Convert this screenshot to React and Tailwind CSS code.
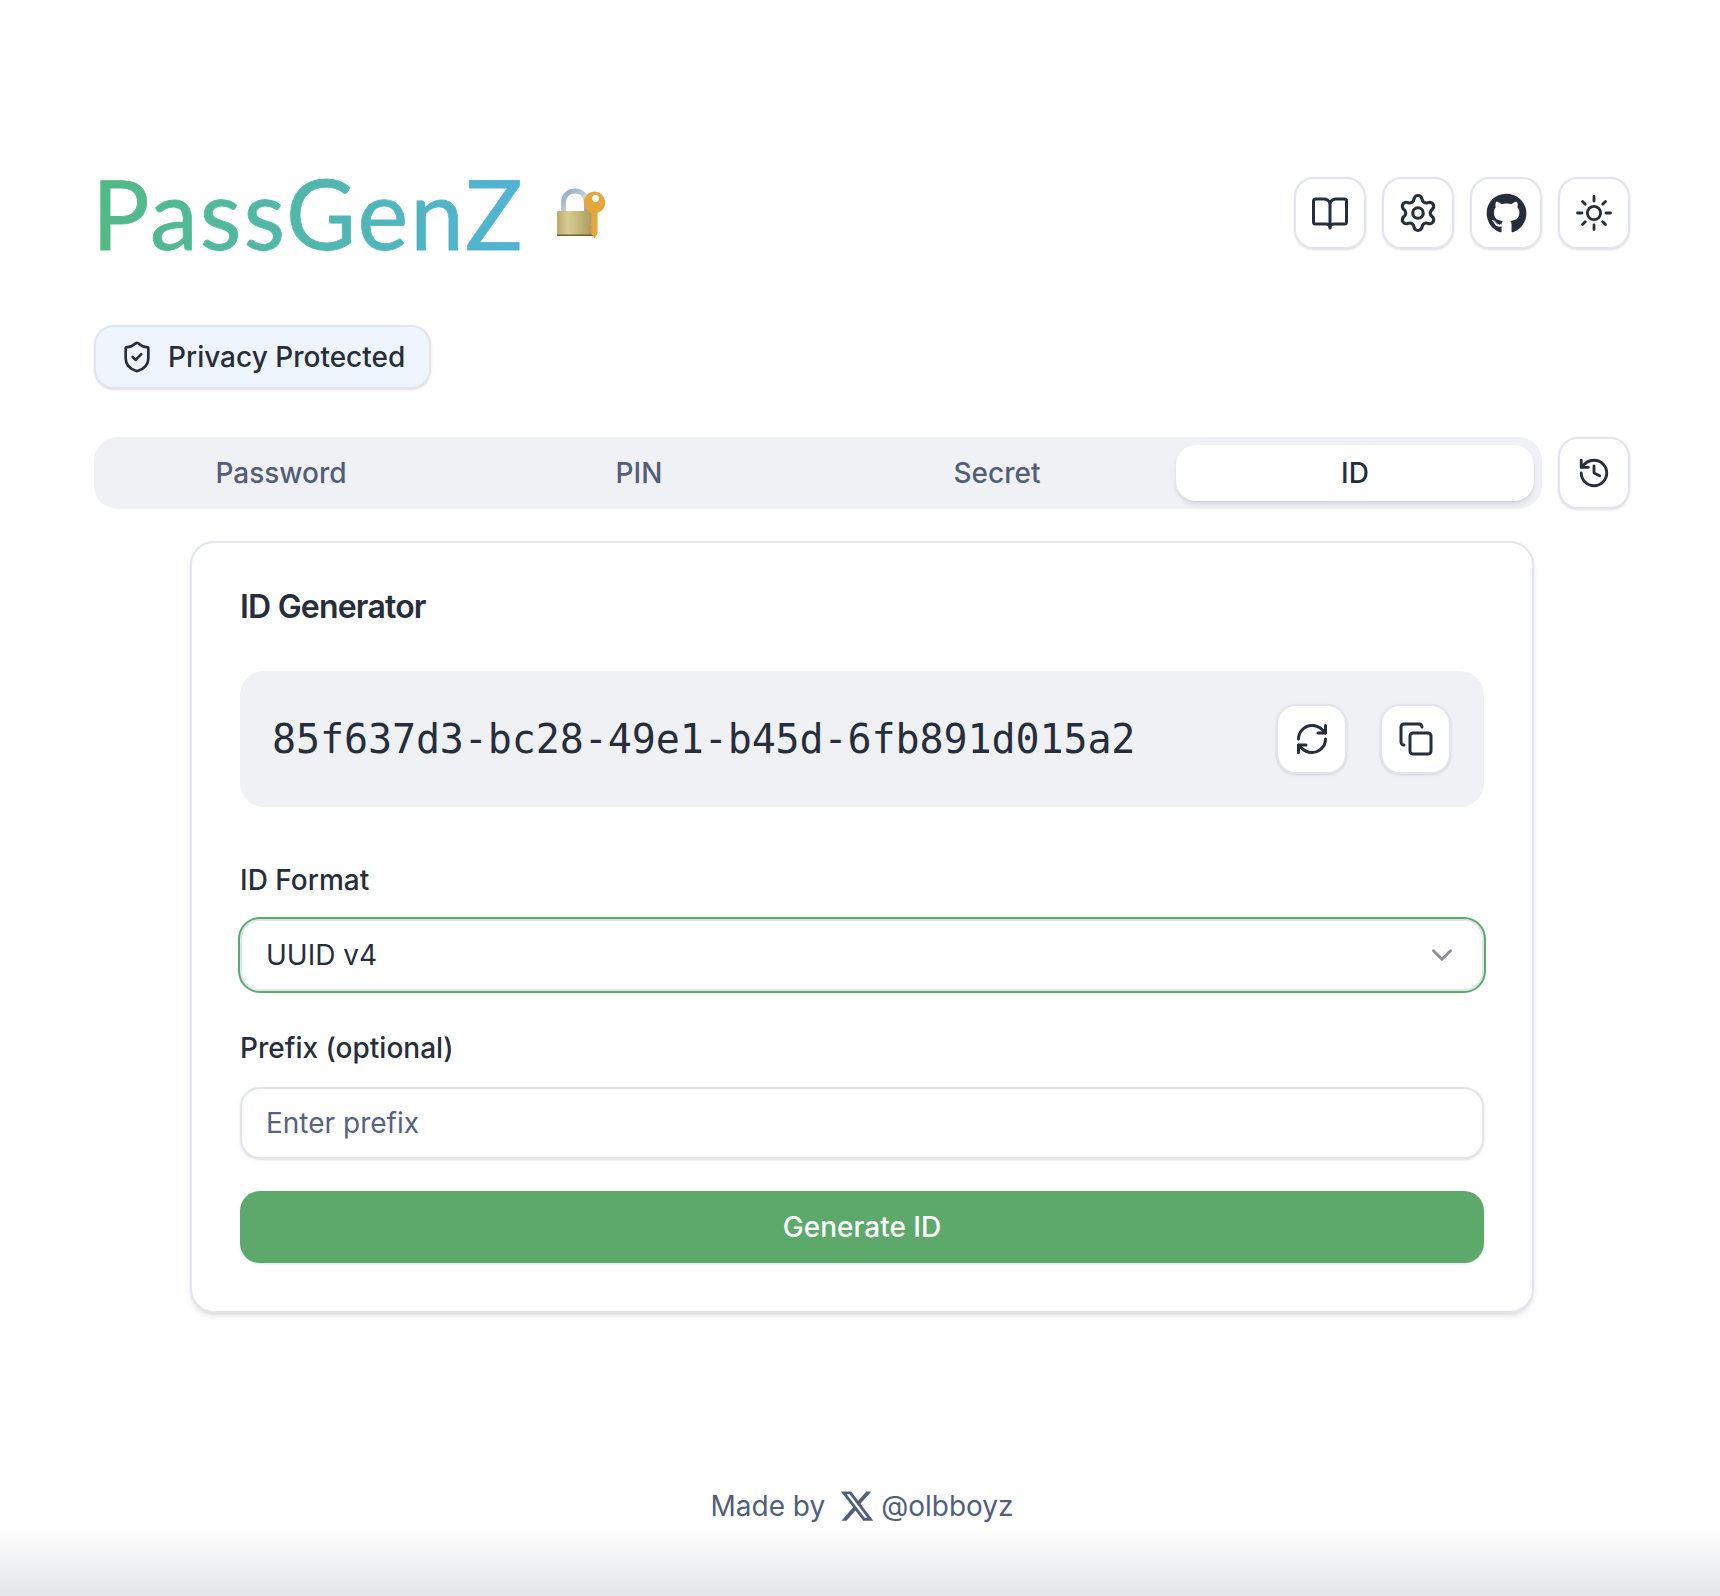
import { ChevronDown, Copy, History, RefreshCw, Settings, ShieldCheck } from 'lucide-react';
import { FaGithub } from 'react-icons/fa';
import { FaXTwitter } from 'react-icons/fa6';

const TABS = ['Password', 'PIN', 'Secret', 'ID'];

function BookIcon() {
  return (
    <svg width="38" height="36" viewBox="0 0 38 36" fill="none" stroke="currentColor" strokeWidth="3" strokeLinecap="round" strokeLinejoin="round">
      <path d="M19 8c-1.5-3-3-4-6-4H4.500a2 2 0 0 0-2 2v21a2 2 0 0 0 2 2H15c2 0 4 1 4 3c0-2 2-3 4-3h10.500a2 2 0 0 0 2-2V6a2 2 0 0 0-2-2H25c-3 0-4.500 1-6 4z" />
      <path d="M19 8v25" />
    </svg>
  );
}

function SunIcon() {
  return (
    <svg width="38" height="38" viewBox="0 0 38 38" fill="none" stroke="currentColor" strokeWidth="2.800" strokeLinecap="round">
      <circle cx="19" cy="19" r="6.600" />
      <path d="M19 2.500v4.500M19 31v4.500M2.500 19H7M31 19h4.500M7.500 7.500l2.800 2.800M27.700 27.700l2.800 2.800M7.500 30.500l2.800-2.800M27.700 10.300l2.800-2.800" />
    </svg>
  );
}

// the locked-with-key emoji
function LockKeyEmoji() {
  return (
    <svg width="52" height="52" viewBox="0 0 52 52" className="ml-[31px] mt-[1px]">
      <defs>
        <linearGradient id="brass" x1="0" y1="0" x2="1" y2="0">
          <stop offset="0" stopColor="#b9ab6c" />
          <stop offset="0.3" stopColor="#d8cc94" />
          <stop offset="0.6" stopColor="#c5b878" />
          <stop offset="1" stopColor="#a8975a" />
        </linearGradient>
        <linearGradient id="steel" x1="0" y1="0" x2="1" y2="1">
          <stop offset="0" stopColor="#8fa6c4" />
          <stop offset="0.6" stopColor="#c9d3de" />
          <stop offset="1" stopColor="#8d97a8" />
        </linearGradient>
      </defs>
      <path d="M7.500 24V15C7.500 7 13 3 19 3S30.500 7 30.500 15v9" fill="none" stroke="url(#steel)" strokeWidth="5" />
      <rect x="1" y="23" width="36" height="25" rx="1.500" fill="url(#brass)" />
      <rect x="1" y="46.500" width="36" height="1.500" fill="#6f6238" />
      <path d="M38.500 3.500a11 11 0 0 1 3 21.500V46l-3 4.500-3-4.500v-3l-1.500-1.500L35.500 40v-2l-1.500-1.500L35.500 35V25a11 11 0 0 1 3-21.500z" fill="#e3a73c" />
      <circle cx="39.500" cy="10.500" r="3.400" fill="#fff" />
    </svg>
  );
}

function IconButton({ children, className = '' }) {
  return (
    <button className={`flex h-[72px] w-[72px] shrink-0 items-center justify-center rounded-[20px] border-2 border-[#e2e5ec] bg-white text-[#272e3b] shadow-sm ${className}`}>
      {children}
    </button>
  );
}

export default function App() {
  return (
    <div className="flex min-h-[1596px] flex-col bg-white font-['Inter',sans-serif] text-[28px] text-[#272e3b]">
      <main className="ml-[94px] w-[1536px] pt-[177px]">
        <header className="flex h-[72px] items-center justify-between">
          <div className="flex items-center">
            <h1 className="-ml-[2px] bg-gradient-to-r from-[#52ba82] to-[#52b2d6] bg-clip-text font-['Lato',sans-serif] text-[96px] leading-[96px] tracking-[2px] text-transparent [-webkit-text-stroke:0.8px_transparent]">
              PassGenZ
            </h1>
            <LockKeyEmoji />
          </div>
          <div className="flex gap-4">
            <IconButton><BookIcon /></IconButton>
            <IconButton><Settings size={42} strokeWidth={1.800} /></IconButton>
            <IconButton><FaGithub size={41} /></IconButton>
            <IconButton><SunIcon /></IconButton>
          </div>
        </header>

        <div className="mt-[76px] inline-flex h-[64px] items-center gap-[14px] rounded-[20px] border-2 border-[#e2e5ec] bg-[#eff5fd] px-6 shadow-sm">
          <ShieldCheck size={34} strokeWidth={1.900} />
          <span className="font-medium">Privacy Protected</span>
        </div>

        <div className="mt-12 flex gap-4">
          <div className="grid h-[72px] flex-1 grid-cols-4 rounded-[24px] bg-[#eff1f5] p-2">
            {TABS.map((tab) =>
              tab === 'ID' ? (
                <div key={tab} className="flex items-center justify-center rounded-[20px] bg-white font-medium shadow-md">
                  {tab}
                </div>
              ) : (
                <div key={tab} className="flex items-center justify-center font-medium text-[#525e79]">
                  {tab}
                </div>
              )
            )}
          </div>
          <IconButton><History size={34} strokeWidth={2} /></IconButton>
        </div>

        <section className="mx-auto mt-8 w-[1344px] rounded-[24px] border-2 border-[#e2e5ec] bg-white p-12 shadow-md">
          <h2 className="text-[32px] font-semibold leading-[32px] tracking-[-0.8px]">ID Generator</h2>

          <div className="mt-12 flex h-[136px] items-center rounded-[24px] bg-[#eff1f5] pl-8 pr-[33px]">
            <code className="flex-1 font-['DejaVu_Sans_Mono',monospace] text-[40px] tracking-[-0.1px]">
              85f637d3-bc28-49e1-b45d-6fb891d015a2
            </code>
            <div className="flex gap-[33px]">
              <button className="flex h-[70px] w-[71px] items-center justify-center rounded-[20px] border-2 border-[#e2e5ec] bg-white shadow-sm">
                <RefreshCw size={36} strokeWidth={2} />
              </button>
              <button className="flex h-[70px] w-[71px] items-center justify-center rounded-[20px] border-2 border-[#e2e5ec] bg-white shadow-sm">
                <Copy size={36} strokeWidth={2} />
              </button>
            </div>
          </div>

          <label className="mt-[57px] block font-medium leading-8">ID Format</label>
          <div className="mt-[23px] flex h-[72px] items-center justify-between rounded-[20px] border-2 border-[#e2e5ec] bg-white pl-6 pr-[23px] shadow-sm ring-2 ring-[#5ca96b]">
            <span>UUID v4</span>
            <ChevronDown size={34} strokeWidth={2} className="text-[#8b8e99]" />
          </div>

          <label className="mt-[41px] block font-medium leading-8">Prefix (optional)</label>
          <input
            placeholder="Enter prefix"
            className="mt-[23px] block h-[72px] w-full rounded-[20px] border-2 border-[#e2e5ec] bg-white px-6 shadow-sm outline-none placeholder:text-[#56627f]"
          />

          <button className="mt-8 flex h-[72px] w-full items-center justify-center rounded-[20px] bg-[#5da96b] font-medium text-white shadow-sm">
            Generate ID
          </button>
        </section>

        <footer className="mt-[177px] flex h-8 items-center justify-center text-[#525e79]">
          <span>Made by</span>
          <FaXTwitter size={36} className="ml-[14px]" />
          <span className="ml-[6px]">@olbboyz</span>
        </footer>
      </main>
      <div className="mt-1 h-[70px] bg-gradient-to-b from-white to-[#e4e5e8]" />
    </div>
  );
}
